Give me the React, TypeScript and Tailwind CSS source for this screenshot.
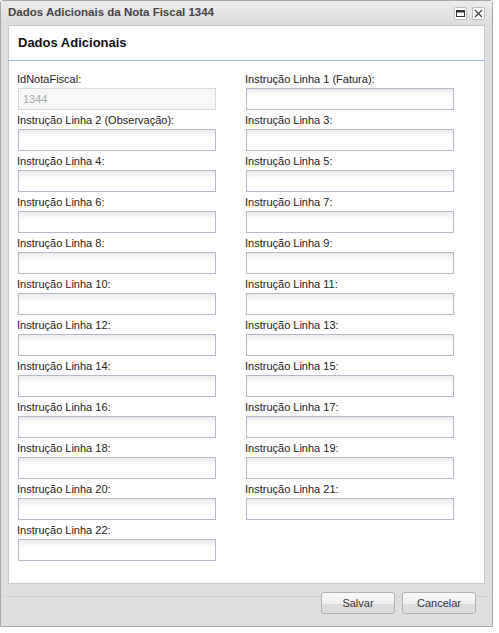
import React from "react";

const left = [
  "Instrução Linha 2 (Observação):",
  "Instrução Linha 4:",
  "Instrução Linha 6:",
  "Instrução Linha 8:",
  "Instrução Linha 10:",
  "Instrução Linha 12:",
  "Instrução Linha 14:",
  "Instrução Linha 16:",
  "Instrução Linha 18:",
  "Instrução Linha 20:",
  "Instrução Linha 22:",
];

const right = [
  "Instrução Linha 1 (Fatura):",
  "Instrução Linha 3:",
  "Instrução Linha 5:",
  "Instrução Linha 7:",
  "Instrução Linha 9:",
  "Instrução Linha 11:",
  "Instrução Linha 13:",
  "Instrução Linha 15:",
  "Instrução Linha 17:",
  "Instrução Linha 19:",
  "Instrução Linha 21:",
];

function Field({ label, value, disabled, wide }: { label: string; value?: string; disabled?: boolean; wide?: boolean }) {
  const w = wide ? "w-[208px]" : "w-[198px]";
  return (
    <div className="flex flex-col h-[41px]">
      <label className="h-[19px] pt-[3px] leading-[14px] text-[11px] text-[#222]">{label}</label>
      <input
        readOnly
        defaultValue={value}
        className={
          disabled
            ? `ml-px ${w} h-[22px] border border-[#d8d8d8] bg-[#f7f7f7] px-[4px] text-[11px] text-[#a8a8a8] outline-none`
            : `ml-px ${w} h-[22px] border border-[#b5b8c8] bg-gradient-to-b from-[#ececec] via-white via-40% to-white px-[4px] text-[11px] outline-none`
        }
      />
    </div>
  );
}

function Button({ children }: { children: React.ReactNode }) {
  return (
    <button className="w-[74px] h-[22px] rounded-[3px] border border-[#b0b0b0] bg-gradient-to-b from-[#fafafa] via-[#f0f0f0] via-55% to-[#dcdcdc] to-55% text-[11px] text-[#333] leading-[20px]">
      {children}
    </button>
  );
}

export default function App() {
  return (
    <div className="w-[499px] h-[633px] bg-white" style={{ fontFamily: '"Liberation Sans", Arial, sans-serif' }}>
      <div className="w-[493px] h-[627px] border border-[#a5a5a5] rounded-t-[3px] bg-[#dfdfdf] flex flex-col">
        <div className="h-[24px] flex items-center justify-between pl-[7px] pr-[7px] bg-gradient-to-b from-[#ececec] to-[#dcdcdc]">
          <span className="text-[11.5px] font-bold text-[#444]">Dados Adicionais da Nota Fiscal 1344</span>
          <div className="flex gap-[5px]">
            <div className="w-[13px] h-[13px] rounded-[2px] border border-[#c0c0c0] bg-white flex items-center justify-center">
              <svg width="9" height="7" viewBox="0 0 9 7">
                <rect x="0.5" y="0.5" width="8" height="6" fill="none" stroke="#333" />
                <rect x="1" y="1" width="7" height="1.5" fill="#333" />
              </svg>
            </div>
            <div className="w-[13px] h-[13px] rounded-[2px] border border-[#c0c0c0] bg-white flex items-center justify-center">
              <svg width="9" height="9" viewBox="0 0 9 9">
                <path d="M1 1L8 8M8 1L1 8" stroke="#444" strokeWidth="1.2" />
              </svg>
            </div>
          </div>
        </div>
        <div className="mx-[7px] h-[559px] border border-[#c8c8c8] bg-white flex flex-col">
          <div className="h-[35px] border-b border-[#99bbe8] flex items-center pl-[9px]">
            <span className="text-[13px] font-bold text-[#111]">Dados Adicionais</span>
          </div>
          <div className="flex pt-[8px] pl-[8px] gap-[29px]">
            <div className="flex flex-col">
              <Field label="IdNotaFiscal:" value="1344" disabled />
              {left.map((l) => (
                <Field key={l} label={l} />
              ))}
            </div>
            <div className="flex flex-col">
              {right.map((l) => (
                <Field key={l} label={l} wide />
              ))}
            </div>
          </div>
        </div>
        <div className="flex-1 flex flex-col">
          <div className="h-[13px] border-b border-[#d2d2d2]"></div>
          <div className="flex justify-end gap-[7px] pr-[16px] -mt-[5px]">
            <Button>Salvar</Button>
            <Button>Cancelar</Button>
          </div>
        </div>
      </div>
    </div>
  );
}
